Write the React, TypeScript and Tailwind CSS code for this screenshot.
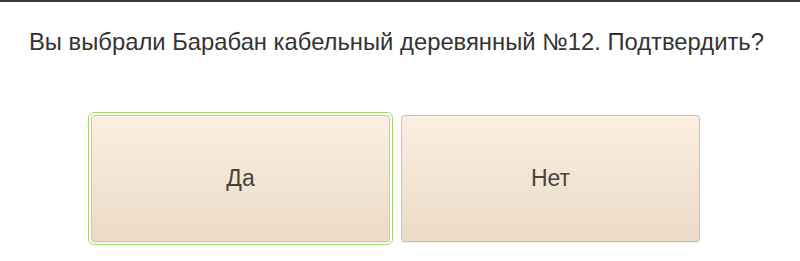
export default function App() {
    const btn =
        "w-[299px] h-[127px] rounded-[3px] border border-[#cbc4bd] bg-gradient-to-b from-[#fcefe1] to-[#ebdac7] text-[23px] text-[#444] shadow-[0_1px_1px_rgba(0,0,0,0.08)] flex items-center justify-center";

    return (
        <div
            className="w-full h-[261px] bg-white border-t-2 border-[#3a3a3a]"
            style={{ fontFamily: '"Liberation Sans", Arial, sans-serif' }}
        >
            <div className="pl-[29px] pt-[26px] text-[23.8px] leading-[28px] text-[#333]">
                Вы выбрали Барабан кабельный деревянный №12. Подтвердить?
            </div>

            <div className="flex gap-[11px] pl-[91px] pt-[59px]">
                <button className={btn + " outline outline-offset-2 outline-[#a4d86c]"}>Да</button>
                <button className={btn}>Нет</button>
            </div>
        </div>
    );
}
